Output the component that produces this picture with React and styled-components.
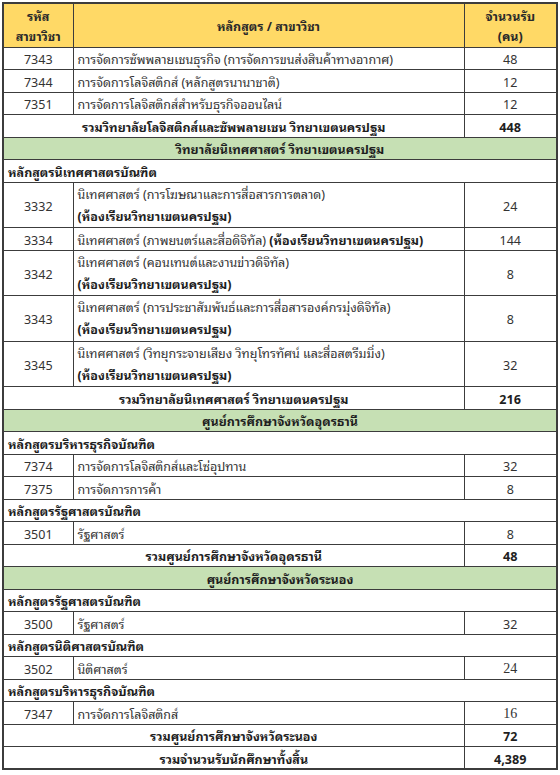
import React from 'react';
import styled, { createGlobalStyle } from 'styled-components';

const GlobalStyle = createGlobalStyle`
  html, body {
    margin: 0;
    padding: 0;
    background: #ffffff;
  }
  body {
    padding: 2px 0 0 2px;
    font-family: Tahoma, "Noto Sans Thai Looped", "Noto Sans Thai", "Noto Sans", "DejaVu Sans", sans-serif;
  }
`;

const Table = styled.table`
  width: 554px;
  border-collapse: collapse;
  table-layout: fixed;
  border: 2px solid #3c3c3c;
  font-size: 12.5px;
  color: #333333;
`;

const Row = styled.tr`
  height: ${(p) => (p.$double ? 45.5 : 22.5)}px;
  background: ${(p) => p.$bg || '#ffffff'};
`;

const HeadRow = styled.tr`
  height: 44px;
  background: #ffd966;
`;

const HeadCell = styled.th`
  border: 1px solid #3c3c3c;
  font-weight: 700;
  color: #2a2a2a;
  line-height: 20px;
  padding: 0 2px;
  text-align: center;
`;

const Cell = styled.td`
  border: 1px solid #3c3c3c;
  padding: 0 4px;
  line-height: 16px;
  vertical-align: middle;
  text-align: ${(p) => p.$align || 'left'};
  font-weight: ${(p) => (p.$bold ? 700 : 400)};
  color: ${(p) => (p.$bold ? '#1f1f1f' : '#333333')};
  white-space: nowrap;
  overflow: hidden;
`;

const Strong = styled.span`
  font-weight: 700;
  color: #1f1f1f;
`;

const Line = styled.div`
  height: 22px;
  line-height: 20px;
`;

const SerifNum = styled.span`
  font-family: "Liberation Serif", "DejaVu Serif", serif;
  font-size: 14px;
`;

const GREEN = '#c6e0b4';
const BRANCH = '(ห้องเรียนวิทยาเขตนครปฐม)';

function Item({ code, name, count, branch, inline }) {
  if (branch && !inline) {
    return (
      <Row $double>
        <Cell $align="center">{code}</Cell>
        <Cell>
          <Line>{name}</Line>
          <Line><Strong>{BRANCH}</Strong></Line>
        </Cell>
        <Cell $align="center">{count}</Cell>
      </Row>
    );
  }
  return (
    <Row>
      <Cell $align="center">{code}</Cell>
      <Cell>
        {name}
        {inline && <> <Strong>{BRANCH}</Strong></>}
      </Cell>
      <Cell $align="center">{count}</Cell>
    </Row>
  );
}

function Faculty({ children }) {
  return (
    <Row $bg={GREEN}>
      <Cell colSpan={3} $align="center" $bold>{children}</Cell>
    </Row>
  );
}

function Program({ children }) {
  return (
    <Row>
      <Cell colSpan={3} $bold>{children}</Cell>
    </Row>
  );
}

function Total({ label, count }) {
  return (
    <Row>
      <Cell colSpan={2} $align="center" $bold>{label}</Cell>
      <Cell $align="center" $bold>{count}</Cell>
    </Row>
  );
}

export default function App() {
  return (
    <>
      <GlobalStyle />
      <Table>
        <colgroup>
          <col style={{ width: 70 }} />
          <col style={{ width: 391 }} />
          <col style={{ width: 93 }} />
        </colgroup>
        <thead>
          <HeadRow>
            <HeadCell>รหัส<br />สาขาวิชา</HeadCell>
            <HeadCell>หลักสูตร / สาขาวิชา</HeadCell>
            <HeadCell>จำนวนรับ<br />(คน)</HeadCell>
          </HeadRow>
        </thead>
        <tbody>
          <Item code="7343" name="การจัดการซัพพลายเชนธุรกิจ (การจัดการขนส่งสินค้าทางอากาศ)" count="48" />
          <Item code="7344" name="การจัดการโลจิสติกส์ (หลักสูตรนานาชาติ)" count="12" />
          <Item code="7351" name="การจัดการโลจิสติกส์สำหรับธุรกิจออนไลน์" count="12" />
          <Total label="รวมวิทยาลัยโลจิสติกส์และซัพพลายเชน วิทยาเขตนครปฐม" count="448" />

          <Faculty>วิทยาลัยนิเทศศาสตร์ วิทยาเขตนครปฐม</Faculty>
          <Program>หลักสูตรนิเทศศาสตรบัณฑิต</Program>
          <Item code="3332" name="นิเทศศาสตร์ (การโฆษณาและการสื่อสารการตลาด)" count="24" branch />
          <Item code="3334" name="นิเทศศาสตร์ (ภาพยนตร์และสื่อดิจิทัล)" count="144" branch inline />
          <Item code="3342" name="นิเทศศาสตร์ (คอนเทนต์และงานข่าวดิจิทัล)" count="8" branch />
          <Item code="3343" name="นิเทศศาสตร์ (การประชาสัมพันธ์และการสื่อสารองค์กรมุ่งดิจิทัล)" count="8" branch />
          <Item code="3345" name="นิเทศศาสตร์ (วิทยุกระจายเสียง วิทยุโทรทัศน์ และสื่อสตรีมมิ่ง)" count="32" branch />
          <Total label="รวมวิทยาลัยนิเทศศาสตร์ วิทยาเขตนครปฐม" count="216" />

          <Faculty>ศูนย์การศึกษาจังหวัดอุดรธานี</Faculty>
          <Program>หลักสูตรบริหารธุรกิจบัณฑิต</Program>
          <Item code="7374" name="การจัดการโลจิสติกส์และโซ่อุปทาน" count="32" />
          <Item code="7375" name="การจัดการการค้า" count="8" />
          <Program>หลักสูตรรัฐศาสตรบัณฑิต</Program>
          <Item code="3501" name="รัฐศาสตร์" count="8" />
          <Total label="รวมศูนย์การศึกษาจังหวัดอุดรธานี" count="48" />

          <Faculty>ศูนย์การศึกษาจังหวัดระนอง</Faculty>
          <Program>หลักสูตรรัฐศาสตรบัณฑิต</Program>
          <Item code="3500" name="รัฐศาสตร์" count="32" />
          <Program>หลักสูตรนิติศาสตรบัณฑิต</Program>
          <Item code="3502" name="นิติศาสตร์" count={<SerifNum>24</SerifNum>} />
          <Program>หลักสูตรบริหารธุรกิจบัณฑิต</Program>
          <Item code="7347" name="การจัดการโลจิสติกส์" count={<SerifNum>16</SerifNum>} />
          <Total label="รวมศูนย์การศึกษาจังหวัดระนอง" count="72" />
          <Total label="รวมจำนวนรับนักศึกษาทั้งสิ้น" count="4,389" />
        </tbody>
      </Table>
    </>
  );
}
